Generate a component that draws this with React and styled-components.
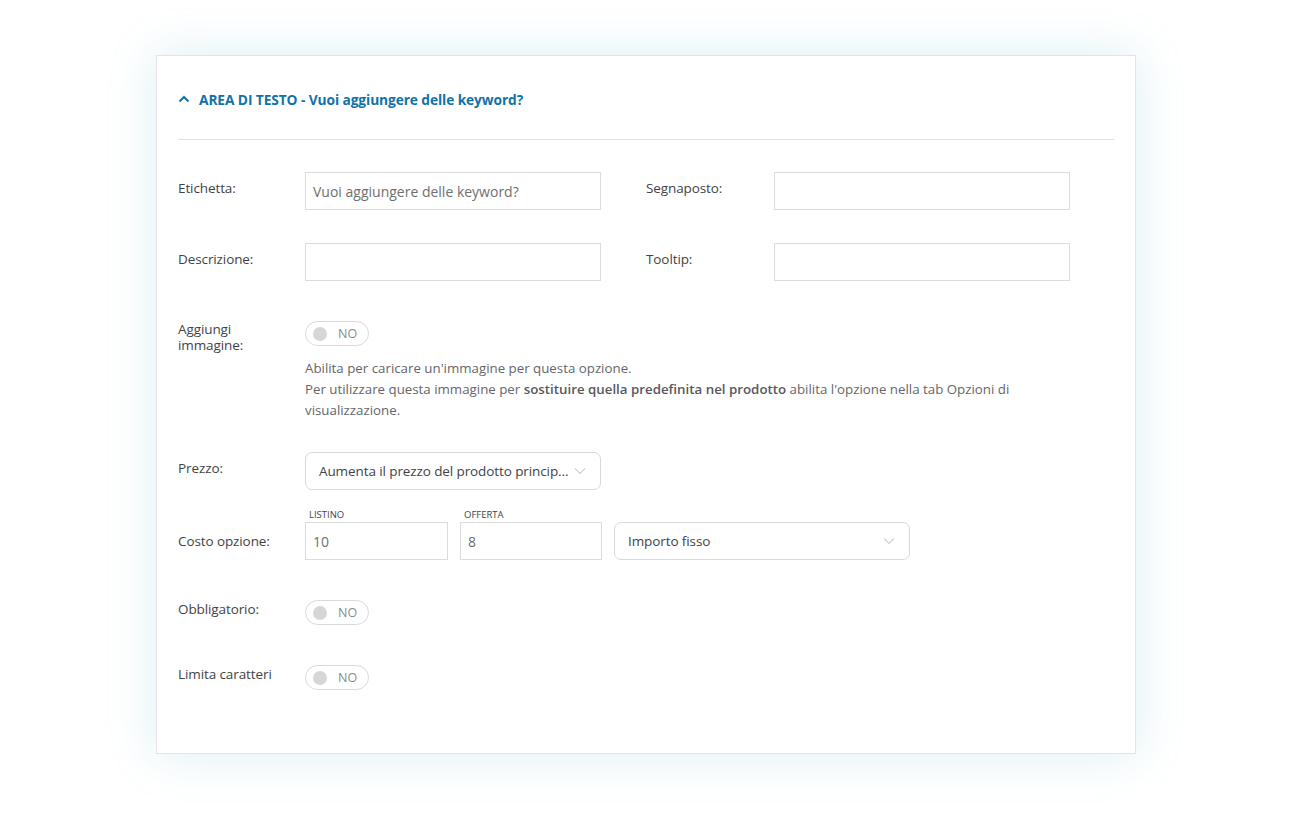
import React from "react";
import styled, { createGlobalStyle } from "styled-components";

const Global = createGlobalStyle`
  html, body { margin: 0; padding: 0; background: #ffffff; }
  body { font-family: "Open Sans", "Noto Sans", sans-serif; color: #444; }
  * { box-sizing: border-box; }
`;

const Page = styled.div`
  width: 1300px;
  min-height: 817px;
  padding: 55px 0 0 156px;
`;

const Card = styled.section`
  width: 980px;
  background: #fff;
  border: 1px solid #e2e4e6;
  box-shadow: 0 0 45px rgba(90, 180, 210, 0.22);
  padding: 0 21px 63px 21px;
`;

const Header = styled.div`
  height: 83px;
  display: flex;
  align-items: center;
  gap: 9px;
  color: #0f73a8;
  font-weight: 700;
  font-size: 13.75px;
  letter-spacing: -0.1px;
  padding-top: 3px;
`;

const Divider = styled.hr`
  border: 0;
  height: 1px;
  background: #dfe1e3;
  margin: 0 0 32px 0;
`;

const Row = styled.div`
  display: grid;
  grid-template-columns: ${(p) => (p.$two ? "127px 296px 45px 128px 296px" : "127px 1fr")};
  align-items: start;
  margin-bottom: ${(p) => p.$gap || 0}px;
`;

const Label = styled.div`
  font-size: 13.5px;
  line-height: 16px;
  color: #3f4347;
  padding-top: ${(p) => p.$pt || 0}px;
  letter-spacing: -0.1px;
`;

const Input = styled.div`
  height: 38px;
  width: ${(p) => p.$w || 296}px;
  border: 1px solid #dcdcdc;
  background: #fff;
  display: flex;
  align-items: center;
  padding: 0 7px;
  font-size: 14px;
  color: #6f6f6f;
`;

const Select = styled.div`
  height: 38px;
  width: ${(p) => p.$w || 296}px;
  border: 1px solid #d9d9d9;
  border-radius: 7px;
  background: #fff;
  display: flex;
  align-items: center;
  justify-content: space-between;
  padding: 0 14px 0 13px;
  font-size: 13.5px;
  color: #3f4347;
  letter-spacing: -0.1px;
`;

const Toggle = styled.div`
  width: 64px;
  height: 25px;
  border: 1px solid #dadada;
  border-radius: 13px;
  display: flex;
  align-items: center;
  padding-left: 7px;
  gap: 11px;
  font-size: 12.5px;
  color: #8a8a8a;
`;

const Knob = styled.span`
  width: 14px;
  height: 14px;
  border-radius: 50%;
  background: #d6d6d6;
`;

const Help = styled.div`
  margin-top: 12px;
  font-size: 13.3px;
  line-height: 21px;
  color: #65666a;
  max-width: 720px;
  b { font-weight: 600; color: #57585c; }
`;

const PriceGroup = styled.div`
  display: flex;
  align-items: flex-end;
  gap: 12px;
`;

const PriceField = styled.div`
  display: flex;
  flex-direction: column;
`;

const Mini = styled.span`
  font-size: 9.5px;
  line-height: 15px;
  color: #444;
  padding-left: 4px;
  text-transform: uppercase;
`;

const Chevron = ({ up }) => (
  <svg width="12" height="8" viewBox="0 0 12 8" fill="none">
    {up ? (
      <path d="M1.5 6.5 L6 2 L10.5 6.5" stroke="#0f73a8" strokeWidth="2" />
    ) : (
      <path d="M1 1.5 L6 6.5 L11 1.5" stroke="#cfcfcf" strokeWidth="1.1" />
    )}
  </svg>
);

const Switch = () => (
  <Toggle>
    <Knob />
    NO
  </Toggle>
);

export default function App() {
  return (
    <>
      <Global />
      <Page>
        <Card>
          <Header>
            <Chevron up />
            <span>AREA DI TESTO - Vuoi aggiungere delle keyword?</span>
          </Header>
          <Divider />

          <Row $two $gap={33}>
            <Label $pt={8}>Etichetta:</Label>
            <Input>Vuoi aggiungere delle keyword?</Input>
            <span />
            <Label $pt={8}>Segnaposto:</Label>
            <Input />
          </Row>

          <Row $two $gap={40}>
            <Label $pt={8}>Descrizione:</Label>
            <Input />
            <span />
            <Label $pt={8}>Tooltip:</Label>
            <Input />
          </Row>

          <Row $gap={31}>
            <Label $pt={0}>
              Aggiungi
              <br />
              immagine:
            </Label>
            <div>
              <Switch />
              <Help>
                Abilita per caricare un'immagine per questa opzione.
                <br />
                Per utilizzare questa immagine per <b>sostituire quella predefinita nel prodotto</b> abilita
                l'opzione nella tab Opzioni di visualizzazione.
              </Help>
            </div>
          </Row>

          <Row $gap={17}>
            <Label $pt={8}>Prezzo:</Label>
            <Select $w={296}>
              <span>Aumenta il prezzo del prodotto princip...</span>
              <Chevron />
            </Select>
          </Row>

          <Row $gap={40}>
            <Label $pt={26}>Costo opzione:</Label>
            <PriceGroup>
              <PriceField>
                <Mini>Listino</Mini>
                <Input $w={143}>10</Input>
              </PriceField>
              <PriceField>
                <Mini>Offerta</Mini>
                <Input $w={142}>8</Input>
              </PriceField>
              <Select $w={296}>
                <span>Importo fisso</span>
                <Chevron />
              </Select>
            </PriceGroup>
          </Row>

          <Row $gap={40}>
            <Label $pt={1}>Obbligatorio:</Label>
            <Switch />
          </Row>

          <Row>
            <Label $pt={1}>Limita caratteri</Label>
            <Switch />
          </Row>
        </Card>
      </Page>
    </>
  );
}
